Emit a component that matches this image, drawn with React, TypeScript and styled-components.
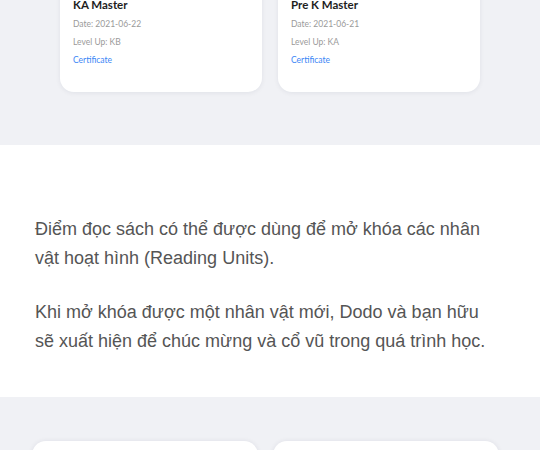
import React from "react";
import styled, { createGlobalStyle } from "styled-components";

const Global = createGlobalStyle`
  html, body { margin: 0; padding: 0; background: #f0f1f5; }
  body { width: 540px; height: 450px; overflow: hidden; }
  * { box-sizing: border-box; }
`;

const Page = styled.div`
  width: 540px;
  display: flex;
  flex-direction: column;
`;

const GraySection = styled.section`
  background: #f0f1f5;
  height: 145px;
  overflow: hidden;
`;

const CardRow = styled.div<{ $left: number; $width: number; $gap: number; $top: number }>`
  display: grid;
  grid-template-columns: ${(p) => p.$width}px ${(p) => p.$width}px;
  column-gap: ${(p) => p.$gap}px;
  padding-left: ${(p) => p.$left}px;
  margin-top: ${(p) => p.$top}px;
`;

const Card = styled.div`
  background: #ffffff;
  border-radius: 14px;
  box-shadow: 0 1px 5px rgba(20, 30, 60, 0.07);
  padding: 18px 13px 23px;
  display: flex;
  flex-direction: column;
  font-family: Lato, "Noto Sans", sans-serif;
`;

const Title = styled.div`
  font-size: 11.5px;
  font-weight: 700;
  line-height: 14px;
  color: #1e1e1e;
  margin-bottom: 3px;
`;

const Meta = styled.div<{ $link?: boolean }>`
  font-size: 8.5px;
  line-height: 18px;
  color: ${(p) => (p.$link ? "#3b86f6" : "#9a9a9a")};
`;

const WhiteSection = styled.section`
  background: #ffffff;
  height: 252px;
  padding: 70px 50px 0 35px;
  font-family: "Liberation Sans", Arial, sans-serif;
  font-size: 18px;
  line-height: 29px;
  color: #555555;
`;

const Para = styled.p`
  margin: 0 0 25px;
`;

const BottomSection = styled.section`
  background: #f0f1f5;
  height: 60px;
  padding-top: 44px;
  overflow: hidden;
`;

const BottomCard = styled.div`
  background: #ffffff;
  border-radius: 14px;
  height: 60px;
  box-shadow: 0 0 5px rgba(20, 30, 60, 0.08);
`;

const cards = [
  { title: "KA Master", date: "2021-06-22", level: "KB" },
  { title: "Pre K Master", date: "2021-06-21", level: "KA" },
];

export default function App() {
  return (
    <Page>
      <Global />
      <GraySection>
        <CardRow $left={60} $width={202} $gap={16} $top={-20}>
          {cards.map((c) => (
            <Card key={c.title}>
              <Title>{c.title}</Title>
              <Meta>Date: {c.date}</Meta>
              <Meta>Level Up: {c.level}</Meta>
              <Meta $link>Certificate</Meta>
            </Card>
          ))}
        </CardRow>
      </GraySection>
      <WhiteSection>
        <Para>
          Điểm đọc sách có thể được dùng để mở khóa các nhân vật hoạt hình (Reading Units).
        </Para>
        <Para>
          Khi mở khóa được một nhân vật mới, Dodo và bạn hữu sẽ xuất hiện để chúc mừng và cổ vũ trong quá trình học.
        </Para>
      </WhiteSection>
      <BottomSection>
        <CardRow $left={32} $width={226} $gap={15} $top={0}>
          <BottomCard />
          <BottomCard />
        </CardRow>
      </BottomSection>
    </Page>
  );
}
